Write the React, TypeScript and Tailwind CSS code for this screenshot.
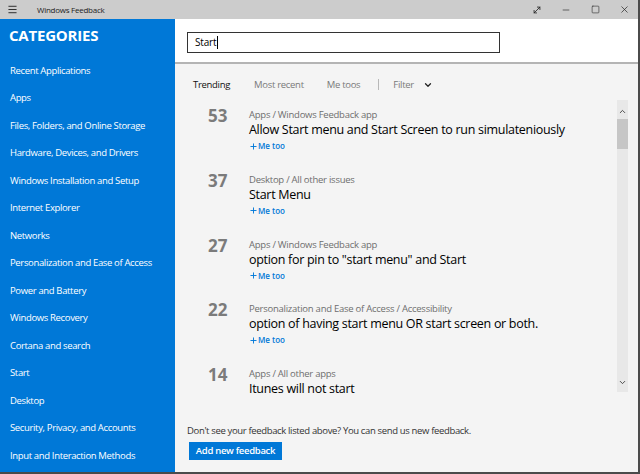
import { Menu, ChevronDown, ChevronUp, Minus, Square, X, MoveDiagonal, Plus } from 'lucide-react';

const categories = [
  'Recent Applications',
  'Apps',
  'Files, Folders, and Online Storage',
  'Hardware, Devices, and Drivers',
  'Windows Installation and Setup',
  'Internet Explorer',
  'Networks',
  'Personalization and Ease of Access',
  'Power and Battery',
  'Windows Recovery',
  'Cortana and search',
  'Start',
  'Desktop',
  'Security, Privacy, and Accounts',
  'Input and Interaction Methods',
];

const feedback = [
  { votes: 53, path: 'Apps / Windows Feedback app', title: 'Allow Start menu and Start Screen to run simulateniously', meToo: true },
  { votes: 37, path: 'Desktop / All other issues', title: 'Start Menu', meToo: true },
  { votes: 27, path: 'Apps / Windows Feedback app', title: 'option for pin to "start menu" and Start', meToo: true },
  { votes: 22, path: 'Personalization and Ease of Access / Accessibility', title: 'option of having start menu OR start screen or both.', meToo: true },
  { votes: 14, path: 'Apps / All other apps', title: 'Itunes will not start', meToo: false },
];

export default function App() {
  return (
    <div
      className="w-[640px] h-[474px] flex flex-col overflow-hidden border-r-2 border-b-2 border-[#4b4b4b] bg-white"
      style={{ fontFamily: '"Open Sans", "Noto Sans", sans-serif' }}
    >
      {/* Title bar */}
      <div className="h-[19px] shrink-0 bg-[#cccccc] flex items-center text-[#222]">
        <Menu className="w-[11px] h-[11px] ml-[7px]" strokeWidth={2} />
        <span className="ml-[19px] text-[8px] tracking-[-0.25px]">Windows Feedback</span>
        <div className="ml-auto flex items-center">
          <MoveDiagonal className="w-[10px] h-[10px] mr-[19px]" strokeWidth={2} />
          <Minus className="w-[10px] h-[10px] mr-[20px]" strokeWidth={1.5} />
          <Square className="w-[9px] h-[9px] mr-[19px]" strokeWidth={1.5} />
          <X className="w-[11px] h-[11px] mr-[8px]" strokeWidth={1.5} />
        </div>
      </div>

      <div className="flex flex-1 min-h-0">
        {/* Sidebar */}
        <div className="w-[175px] shrink-0 bg-[#0078d7] text-white">
          <div className="pl-[9px] pt-[6px] text-[15px] font-bold leading-[20px] tracking-[-0.2px]">CATEGORIES</div>
          <div className="mt-[12px] flex flex-col">
            {categories.map((c) => (
              <div key={c} className="pl-[10px] h-[27.5px] flex items-center text-[9.5px] tracking-[-0.35px] whitespace-nowrap">
                {c}
              </div>
            ))}
          </div>
        </div>

        {/* Main */}
        <div className="flex-1 flex flex-col min-w-0">
          <div className="h-[45px] shrink-0 bg-white border-b-2 border-[#b4b4b4] pt-[13px] pl-[12px]">
            <div className="w-[313px] h-[21px] border border-[#333] flex items-center pl-[7px] text-[10px] text-black tracking-[-0.2px]">
              Start<span className="w-px h-[13px] bg-black ml-[1px]" />
            </div>
          </div>

          <div className="flex-1 bg-[#f4f4f4] flex flex-col min-h-0">
            {/* Tabs */}
            <div className="h-[36px] shrink-0 flex items-start pt-[14px] pl-[18px] text-[9.5px] leading-[14px] tracking-[-0.3px]">
              <span className="text-[#111]">Trending</span>
              <span className="ml-[24px] text-[#7a7a7a]">Most recent</span>
              <span className="ml-[23px] text-[#7a7a7a]">Me toos</span>
              <span className="ml-[18px] mt-[1px] w-px h-[11px] bg-[#b8b8b8]" />
              <span className="ml-[14px] text-[#7a7a7a]">Filter</span>
              <ChevronDown className="ml-[9px] mt-[2px] w-[10px] h-[10px] text-[#222]" strokeWidth={3} />
            </div>

            {/* List */}
            <div className="h-[292px] shrink-0 flex">
              <div className="flex-1 flex flex-col">
                {feedback.map((f) => (
                  <div key={f.votes} className="h-[64.75px] shrink-0 flex pt-[8px] pl-[33px]">
                    <div className="w-[41px] text-[17px] font-bold text-[#7b7b7b] leading-[16px]">{f.votes}</div>
                    <div className="flex flex-col">
                      <div className="text-[9.5px] leading-[13px] text-[#6e6e6e] tracking-[-0.25px]">{f.path}</div>
                      <div className="text-[12.5px] leading-[17px] text-black tracking-[-0.3px] whitespace-nowrap">{f.title}</div>
                      {f.meToo && (
                        <div className="mt-[2px] flex items-center text-[8px] leading-[12px] text-[#0078d7] font-semibold">
                          <Plus className="w-[9px] h-[9px]" strokeWidth={2.5} />
                          <span>Me too</span>
                        </div>
                      )}
                    </div>
                  </div>
                ))}
              </div>
              <div className="w-[11px] mr-[10px] bg-[#e8e8e8] flex flex-col items-center">
                <ChevronUp className="mt-[7px] w-[9px] h-[9px] text-[#444]" strokeWidth={2.5} />
                <div className="mt-[3px] w-full h-[30px] bg-[#c6c6c6]" />
                <div className="flex-1" />
                <ChevronDown className="mb-[5px] w-[9px] h-[9px] text-[#444]" strokeWidth={2.5} />
              </div>
            </div>

            {/* Footer */}
            <div className="pl-[12px] pt-[32px]">
              <div className="text-[9.5px] leading-[14px] text-[#333] tracking-[-0.35px]">
                Don't see your feedback listed above? You can send us new feedback.
              </div>
              <button className="mt-[4px] ml-[2px] h-[18px] w-[93px] bg-[#0078d7] text-white text-[9.5px] font-semibold tracking-[-0.3px] flex items-center justify-center">
                Add new feedback
              </button>
            </div>
          </div>
        </div>
      </div>
    </div>
  );
}
